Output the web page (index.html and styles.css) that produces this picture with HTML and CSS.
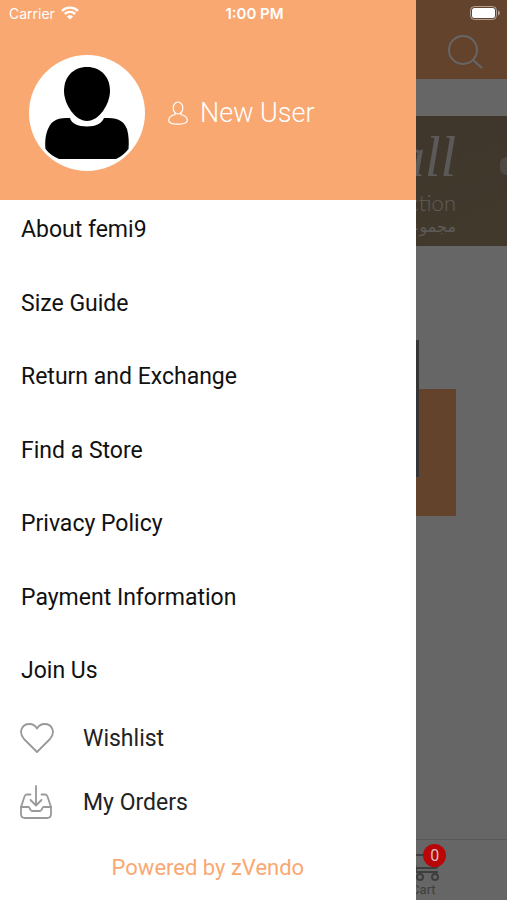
FILE: index.html
```
<!DOCTYPE html>
<html lang="en">
<head>
    <meta charset="UTF-8">
    <meta name="viewport" content="width=device-width, initial-scale=1.0">
    <title>femi9</title>
    <link rel="stylesheet" href="styles.css">
</head>
<body>
    <div class="status-bar">
        <div class="carrier">
            <span>Carrier</span>
            <svg width="18" height="14" viewBox="0 0 18 14" fill="none" stroke="#fff" stroke-width="2.4">
                <path d="M1 4.8C5.5.6 12.5.6 17 4.8"/>
                <path d="M3.8 8C6.8 5.2 11.2 5.2 14.2 8"/>
                <path d="M9 13.5L5.9 10.4C7.7 8.8 10.3 8.8 12.1 10.4Z" fill="#fff" stroke="none"/>
            </svg>
        </div>
        <span class="time">1:00 PM</span>
        <div class="battery">
            <svg width="30" height="14" viewBox="0 0 30 14">
                <rect x="0.5" y="0.5" width="26" height="13" rx="4" fill="none" stroke="#fff" stroke-opacity=".5"/>
                <rect x="2" y="2" width="23" height="10" rx="2.5" fill="#fff"/>
                <path d="M28 4.5C30.5 5.5 30.5 8.5 28 9.5Z" fill="#fff" fill-opacity=".5"/>
            </svg>
        </div>
    </div>

    <!-- Shop page behind the menu -->
    <main class="page">
        <header class="top-bar">
            <button class="search-btn" aria-label="Search">
                <svg width="36" height="36" viewBox="0 0 36 36" fill="none" stroke="#fff" stroke-width="2">
                    <circle cx="16" cy="16" r="14"/>
                    <path d="M26 26L35 34"/>
                </svg>
            </button>
        </header>

        <section class="banner">
            <div class="banner-text">
                <p class="banner-script">all</p>
                <p class="banner-title">collection</p>
                <p class="banner-arabic" lang="ar" dir="rtl">مجموعة</p>
            </div>
            <span class="banner-shape"></span>
        </section>

        <section class="product">
            <div class="product-block">
                <div class="product-photo"></div>
            </div>
        </section>

        <nav class="tab-bar">
            <a href="#" class="tab">
                <svg width="34" height="32" viewBox="0 0 34 32" fill="none" stroke="#999" stroke-width="2">
                    <path d="M1 2H5L10 19H30L33 16"/>
                    <path d="M6 6H31L33 16"/>
                    <path d="M10 19V23H32"/>
                    <circle cx="14" cy="28" r="3"/>
                    <circle cx="29" cy="28" r="3"/>
                </svg>
                <span>Cart</span>
                <span class="badge">0</span>
            </a>
        </nav>
    </main>

    <div class="backdrop"></div>

    <aside class="drawer">
        <header class="profile">
            <svg class="avatar" width="116" height="116" viewBox="0 0 116 116">
                <circle cx="58" cy="58" r="58" fill="#fff"/>
                <path d="M58 12C44 12 35 22 35 36C35 49 46 66 58 66C70 66 81 49 81 36C81 22 72 12 58 12Z"/>
                <path d="M41 63C42 68 49 71.5 58 71.5C67 71.5 73 68 75 63C87 63 94 64 98 74C100 81 100 88 99.5 94Q94 101 87 104H30Q21 100 16.5 94C16 88 16 81 19 74C23 64 30 63 41 63Z"/>
            </svg>
            <a href="#" class="user">
                <svg width="20" height="24" viewBox="0 0 20 24" fill="none" stroke="#fff" stroke-width="1.2">
                    <ellipse cx="10" cy="7" rx="4.8" ry="6"/>
                    <path d="M7 12V13.5C3 14.5 .7 16.5 .7 19.5C.7 22 5 23.2 10 23.2C15 23.2 19.3 22 19.3 19.5C19.3 16.5 17 14.5 13 13.5V12"/>
                </svg>
                New User
            </a>
        </header>

        <ul class="menu">
            <li><a href="#">About femi9</a></li>
            <li><a href="#">Size Guide</a></li>
            <li><a href="#">Return and Exchange</a></li>
            <li><a href="#">Find a Store</a></li>
            <li><a href="#">Privacy Policy</a></li>
            <li><a href="#">Payment Information</a></li>
            <li><a href="#">Join Us</a></li>
        </ul>

        <ul class="shortcuts">
            <li>
                <a href="#">
                    <svg width="34" height="34" viewBox="0 0 34 34" fill="none" stroke="#999" stroke-width="1.8" stroke-linejoin="round">
                        <path d="M17 31L4 18C-2 11 2 3 9.5 3C13 3 15.5 5 17 7.5C18.5 5 21 3 24.5 3C32 3 36 11 30 18Z"/>
                    </svg>
                    Wishlist
                </a>
            </li>
            <li>
                <a href="#">
                    <svg width="34" height="34" viewBox="0 0 34 34" fill="none" stroke="#999" stroke-width="1.8" stroke-linecap="round" stroke-linejoin="round">
                        <path d="M16 1V20M10.5 15L16 20.5L21.5 15"/>
                        <path d="M10.5 9.5H7C5.5 9.5 5 10 4.500 11.5L1 22V29C1 31.5 2.5 33 5 33H27C29.5 33 31 31.5 31 29V22L27.5 11.5C27 10 26.5 9.5 25 9.5H21.5"/>
                        <path d="M1 22H8.5C10 22 10 26 12 26H20C22 26 22 22 23.5 22H31"/>
                    </svg>
                    My Orders
                </a>
            </li>
        </ul>

        <footer class="powered">Powered by zVendo</footer>
    </aside>
</body>
</html>
```

FILE: styles.css
```
* {
    margin: 0;
    padding: 0;
    box-sizing: border-box;
}

body {
    position: relative;
    min-height: 100vh;
    font-family: Roboto, "Liberation Sans", sans-serif;
    background-color: #fff;
    overflow-x: hidden;
}

a {
    color: inherit;
    text-decoration: none;
}

ul {
    list-style: none;
}

svg {
    display: block;
    flex-shrink: 0;
}

/* Status bar */
.status-bar {
    position: absolute;
    top: 0;
    left: 0;
    right: 0;
    z-index: 5;
    display: grid;
    grid-template-columns: 1fr auto 1fr;
    align-items: center;
    height: 26px;
    padding: 0 7px 0 9px;
    color: #fff;
    font-family: Inter, sans-serif;
    font-size: 14px;
}

.carrier {
    display: flex;
    align-items: center;
    gap: 6px;
}

.time {
    font-size: 15px;
    font-weight: 600;
}

.battery {
    justify-self: end;
}

/* Page */
.page {
    display: flex;
    flex-direction: column;
    min-height: 100vh;
}

.top-bar {
    display: flex;
    justify-content: flex-end;
    align-items: flex-end;
    height: 79px;
    padding: 0 24px 9px;
    background-color: #f9a872;
}

.search-btn {
    background: none;
    border: none;
    cursor: pointer;
}

.banner {
    display: flex;
    justify-content: flex-end;
    align-items: center;
    height: 130px;
    margin-top: 37px;
    background: linear-gradient(160deg, #97856a, #a48f6f);
    overflow: hidden;
}

.banner-text {
    margin-right: 51px;
    color: #e6e1dc;
    text-align: right;
}

.banner-script {
    font-family: "Liberation Serif", serif;
    font-style: italic;
    font-size: 56px;
    line-height: 64px;
}

.banner-title {
    font-family: Lato, sans-serif;
    font-weight: 300;
    font-size: 22px;
    line-height: 28px;
}

.banner-arabic {
    font-family: "DejaVu Sans", sans-serif;
    font-size: 16px;
    line-height: 20px;
    text-align: start;
}

.banner-shape {
    width: 7px;
    height: 18px;
    margin-bottom: 30px;
    margin-left: -7px;
    border-radius: 9px 0 0 9px;
    background-color: #c4b8a8;
}

.product {
    flex: 1;
    padding: 143px 51px 0;
}

.product-block {
    position: relative;
    height: 127px;
    background-color: #f9a872;
}

.product-photo {
    position: absolute;
    top: -49px;
    right: 37px;
    width: 160px;
    height: 137px;
    background-color: #fff;
    border: 3px solid #85868c;
    border-top-width: 8px;
}

.tab-bar {
    display: flex;
    justify-content: flex-end;
    height: 61px;
    border-top: 1px solid #ddd;
}

.tab {
    position: relative;
    display: flex;
    flex-direction: column;
    align-items: center;
    width: 33%;
    padding-top: 9px;
    color: #999;
    font-size: 13px;
    line-height: 18px;
}

.badge {
    position: absolute;
    top: 4px;
    left: 50%;
    z-index: 3;
    width: 23px;
    height: 23px;
    border-radius: 50%;
    background-color: #b90606;
    color: #ddc0c0;
    font-size: 16px;
    line-height: 23px;
    text-align: center;
}

.backdrop {
    position: absolute;
    inset: 0;
    z-index: 2;
    background-color: rgba(0, 0, 0, 0.6);
}

/* Drawer */
.drawer {
    position: absolute;
    top: 0;
    bottom: 0;
    left: 0;
    z-index: 4;
    display: flex;
    flex-direction: column;
    width: 82%;
    background-color: #fff;
}

.profile {
    display: flex;
    align-items: center;
    gap: 23px;
    height: 200px;
    padding: 26px 29px 0;
    background-color: #f9a872;
}

.user {
    display: flex;
    align-items: center;
    gap: 12px;
    color: #fff;
    font-size: 27px;
    font-weight: 300;
}

.menu {
    flex: 1;
    display: flex;
    flex-direction: column;
    justify-content: space-between;
    padding: 15px 21px 20px;
    color: #111;
    font-size: 23px;
    line-height: 30px;
}

.shortcuts {
    padding: 0 20px;
    color: #222;
    font-size: 23px;
}

.shortcuts a {
    display: flex;
    align-items: center;
    gap: 29px;
    height: 64px;
}

.powered {
    height: 66px;
    color: #f9a872;
    font-size: 22px;
    line-height: 68px;
    text-align: center;
}
```
